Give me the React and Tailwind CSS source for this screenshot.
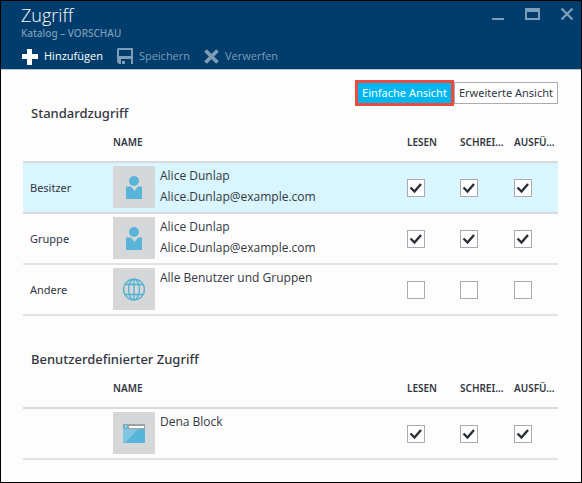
import React from 'react';

const COLUMNS = [
  { key: 'read', label: 'LESEN', title: 'Lesen' },
  { key: 'write', label: 'SCHREI...', title: 'Schreiben' },
  { key: 'execute', label: 'AUSFÜ...', title: 'Ausführen' },
];

const STANDARD = [
  { role: 'Besitzer', icon: 'user', lines: ['Alice Dunlap', 'Alice.Dunlap@example.com'], checked: true, selected: true },
  { role: 'Gruppe', icon: 'user', lines: ['Alice Dunlap', 'Alice.Dunlap@example.com'], checked: true },
  { role: 'Andere', icon: 'globe', lines: ['Alle Benutzer und Gruppen'], checked: false },
];

const CUSTOM = [{ role: '', icon: 'window', lines: ['Dena Block'], checked: true }];

function UserIcon() {
  return (
    <svg width="42" height="42" viewBox="0 0 42 42" fill="#59b4d9" aria-hidden="true">
      <circle cx="21" cy="15" r="5" />
      <path d="M13 20.5h5l3.500 4.500 3.500-4.500H29V33H13z" />
    </svg>
  );
}

function GlobeIcon() {
  return (
    <svg width="42" height="42" viewBox="0 0 42 42" fill="none" stroke="#4db1cf" strokeWidth="1.3" aria-hidden="true">
      <circle cx="21" cy="21.5" r="10.4" />
      <ellipse cx="21" cy="21.5" rx="5.4" ry="10.4" />
      <path d="M21 11v21M12.2 16.5h17.6M12.2 26.5h17.6" />
    </svg>
  );
}

function WindowIcon() {
  return (
    <svg width="42" height="42" viewBox="0 0 42 42" aria-hidden="true">
      <path d="M10 12h22v5H10z" fill="#a0a1a2" />
      <path d="M10 17h22v14H10z" fill="#59b4d9" />
      <path d="M10 17h15L12 31h-2z" fill="#80c6e3" />
      <path d="M16 14h15v2H16z" fill="#fff" />
      <circle cx="13" cy="14.5" r="2.3" fill="#59b4d9" />
      <path d="M12.5 13.5h1v2h-1z" fill="#fff" />
    </svg>
  );
}

const ICONS = { user: UserIcon, globe: GlobeIcon, window: WindowIcon };

function Check({ label, defaultChecked }) {
  return (
    <span className="relative block h-[18px] w-[18px]">
      <input
        type="checkbox"
        aria-label={label}
        defaultChecked={defaultChecked}
        className="peer block h-[18px] w-[18px] appearance-none border border-[#a9abb0] bg-white"
      />
      <svg
        viewBox="0 0 18 18"
        className="pointer-events-none absolute inset-0 hidden h-[18px] w-[18px] peer-checked:block"
        fill="none"
        stroke="#2b3038"
        strokeWidth="2.4"
        aria-hidden="true"
      >
        <path d="M3.500 8.500l4 4 6.500-7.500" />
      </svg>
    </span>
  );
}

function AccessTable({ title, rows }) {
  return (
    <section>
      <h2 className="pl-2 text-[13px] leading-[22px] font-medium text-[#33373f]">{title}</h2>
      <table className="mt-2 w-full table-fixed border-collapse text-left">
        <colgroup>
          <col className="w-[90px]" />
          <col />
          <col className="w-[53px]" />
          <col className="w-[54px]" />
          <col className="w-11" />
        </colgroup>
        <thead>
          <tr className="h-[30px] border-b-2 border-[#d9dadd] align-top text-[10px] leading-5 text-[#33373f]">
            <th aria-label="Rolle" />
            <th className="font-semibold">NAME</th>
            {COLUMNS.map((c) => (
              <th key={c.key} className="font-semibold whitespace-nowrap">{c.label}</th>
            ))}
          </tr>
        </thead>
        <tbody>
          {rows.map((row) => {
            const Icon = ICONS[row.icon];
            return (
              <tr
                key={row.role + row.icon}
                className={
                  row.selected
                    ? 'h-[51px] border-b-2 border-[#d9dadd] bg-[#d9f5fd]'
                    : 'h-[51px] border-b-2 border-[#e2e3e6]'
                }
              >
                <td className="pt-0.5 pl-[7px] text-[11px]">{row.role}</td>
                <td className="pt-0.5 align-top">
                  <div className="flex gap-[5px]">
                    <div className="mt-px h-[42px] w-[42px] shrink-0 bg-[#d6d7d8]">
                      <Icon />
                    </div>
                    <div className="font-['Open_Sans','Noto_Sans',sans-serif] text-xs leading-[21px] whitespace-nowrap">
                      {row.lines.map((l) => (
                        <div key={l}>{l}</div>
                      ))}
                    </div>
                  </div>
                </td>
                {COLUMNS.map((c) => (
                  <td key={c.key}>
                    <Check label={`${c.title} – ${row.role || row.lines[0]}`} defaultChecked={row.checked} />
                  </td>
                ))}
              </tr>
            );
          })}
        </tbody>
      </table>
    </section>
  );
}

export default function App() {
  return (
    <div className="min-h-screen border border-black bg-[#fdfdfe] font-['Noto_Sans','Open_Sans',sans-serif] text-[#33373f]">
      <header className="border-b border-[#b9c3cc] bg-[#003c6c] pl-5 text-[#7d9cb6]">
        <div className="flex items-start justify-between">
          <div className="pt-0.5">
            <h1 className="font-['Open_Sans','Noto_Sans',sans-serif] text-lg leading-6 font-light text-white">Zugriff</h1>
            <p className="text-[10px] leading-3 font-medium">Katalog – VORSCHAU</p>
          </div>
          <div className="flex items-center gap-5 pt-1.5 pr-[7px]">
            <button type="button" aria-label="Minimieren">
              <svg width="14" height="14" viewBox="0 0 14 14" fill="currentColor"><path d="M2 11h12v2H2z" /></svg>
            </button>
            <button type="button" aria-label="Maximieren">
              <svg width="16" height="14" viewBox="0 0 16 14"><path d="M1 1h15v12H1zM3 5v6h11V5z" fill="currentColor" fillRule="evenodd" /></svg>
            </button>
            <button type="button" aria-label="Schließen">
              <svg width="14" height="14" viewBox="0 0 14 14" fill="none" stroke="currentColor" strokeWidth="2.4"><path d="M1.500 1.500l11 11M12.500 1.500l-11 11" /></svg>
            </button>
          </div>
        </div>
        <div className="flex items-center gap-3.5 pt-[7px] pb-[3px] font-['Open_Sans','Noto_Sans',sans-serif] text-[11px] leading-5">
          <button type="button" className="flex items-center gap-1.5 font-medium text-white">
            <svg width="17" height="17" viewBox="0 0 17 17" fill="currentColor" aria-hidden="true"><path d="M6 1h5v5h6v5h-6v6H6v-6H1V6h5z" /></svg>
            Hinzufügen
          </button>
          <button type="button" className="flex items-center gap-1.5">
            <svg width="16" height="17" viewBox="0 0 16 17" aria-hidden="true"><path d="M1 0h15v16h-2v-5H4v5H2L0 14V1zM2 2v6h12V2zM5 13h3v3H5z" fill="currentColor" fillRule="evenodd" /></svg>
            Speichern
          </button>
          <button type="button" className="flex items-center gap-1.5">
            <svg width="15" height="15" viewBox="0 0 15 15" fill="none" stroke="currentColor" strokeWidth="3.8" aria-hidden="true"><path d="M1.500 1.500l12 12M13.500 1.500l-12 12" /></svg>
            Verwerfen
          </button>
        </div>
      </header>

      <main className="pt-2.5 pr-[23px] pl-[22px]">
        <div className="flex items-center justify-end text-[11px]">
          <button type="button" className="h-[26px] border-[3px] border-[#ea4c40] bg-[#00b6f1] px-1 text-white">
            Einfache Ansicht
          </button>
          <button type="button" className="h-[22px] border border-[#aaacb2] bg-white px-1">
            Erweiterte Ansicht
          </button>
        </div>
        <div className="-mt-1 flex flex-col gap-8">
          <AccessTable title="Standardzugriff" rows={STANDARD} />
          <AccessTable title="Benutzerdefinierter Zugriff" rows={CUSTOM} />
        </div>
      </main>
    </div>
  );
}
